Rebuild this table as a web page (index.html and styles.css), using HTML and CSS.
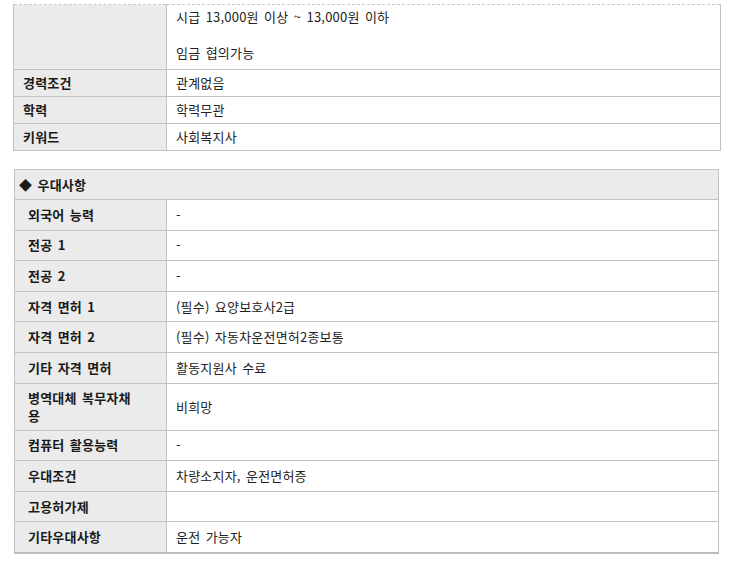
FILE: index.html
```html
<!DOCTYPE html>
<html lang="ko">
<head>
<meta charset="utf-8">
<link rel="stylesheet" href="styles.css">
</head>
<body>
<div class="wrap">
  <table class="info">
    <colgroup><col class="c1"><col></colgroup>
    <tr class="tall">
      <th></th>
      <td>시급 13,000원 이상 ~ 13,000원 이하<br><br>임금 협의가능</td>
    </tr>
    <tr><th>경력조건</th><td>관계없음</td></tr>
    <tr><th>학력</th><td>학력무관</td></tr>
    <tr><th>키워드</th><td>사회복지사</td></tr>
  </table>

  <table class="pref">
    <colgroup><col class="c1"><col></colgroup>
    <tr><th class="head" colspan="2">◆ 우대사항</th></tr>
    <tr><th>외국어 능력</th><td>-</td></tr>
    <tr><th>전공 1</th><td>-</td></tr>
    <tr><th>전공 2</th><td>-</td></tr>
    <tr><th>자격 면허 1</th><td>(필수) 요양보호사2급</td></tr>
    <tr><th>자격 면허 2</th><td>(필수) 자동차운전면허2종보통</td></tr>
    <tr><th>기타 자격 면허</th><td>활동지원사 수료</td></tr>
    <tr class="two"><th>병역대체 복무자채<br>용</th><td>비희망</td></tr>
    <tr><th>컴퓨터 활용능력</th><td>-</td></tr>
    <tr><th>우대조건</th><td>차량소지자, 운전면허증</td></tr>
    <tr><th>고용허가제</th><td></td></tr>
    <tr><th>기타우대사항</th><td>운전 가능자</td></tr>
  </table>
</div>
</body>
</html>
```

FILE: styles.css
```css
html, body {
  margin: 0;
  padding: 0;
  background: #ffffff;
}
.wrap {
  padding: 4px 0 0 13px;
  font-family: "Noto Sans CJK KR", "Noto Sans", sans-serif;
  font-size: 13px;
  color: #222;
  word-spacing: 1.5px;
  letter-spacing: 0.2px;
}
table {
  border-collapse: collapse;
  table-layout: fixed;
}
.c1 {
  width: 153px;
}
th, td {
  border: 1px solid #c2c2c2;
  text-align: left;
  vertical-align: middle;
  line-height: 18px;
  padding: 0 9px;
}
th {
  background: #ebebeb;
  font-weight: bold;
  color: #1a1a1a;
}
td {
  background: #fff;
  font-weight: normal;
}

.info {
  width: 708px;
  border-top: 1px dashed #c8c8c8;
}
.info th,
.info td {
  height: 26px;
}
.info tr:first-child th,
.info tr:first-child td {
  border-top: 1px dashed #c8c8c8;
}
.info tr.tall td,
.info tr.tall th {
  height: 54px;
  padding-top: 3px;
  padding-bottom: 7px;
  vertical-align: top;
}

.pref {
  width: 705px;
  margin: 18px 0 0 1px;
  border-bottom: 2px solid #bdbdbd;
}
.pref .c1 {
  width: 152px;
}
.pref th {
  height: 29.6px;
  padding-left: 13px;
  padding-right: 4px;
}
.pref td {
  height: 29.6px;
}
.pref th.head {
  padding-left: 4px;
  height: 29px;
}
.pref tr.two th,
.pref tr.two td {
  height: 46px;
}
```
